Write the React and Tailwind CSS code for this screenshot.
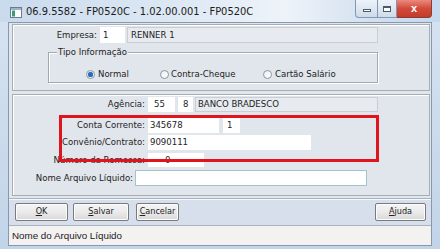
import React from "react";

const Radio = ({ checked }) => (
  <span className="w-[9px] h-[9px] rounded-full border border-[#8e97a3] bg-gradient-to-br from-[#e9edf1] to-[#ffffff] flex items-center justify-center shrink-0">
    {checked && <span className="w-[5px] h-[5px] rounded-full bg-[#2a6bb8] shadow-[0_0_1px_#3d8ae0]" />}
  </span>
);

const Btn = ({ w, ul, rest }) => (
  <div className={`${w} h-[18px] rounded-[2px] border border-[#7a7a7a] bg-gradient-to-b from-[#f4f4f4] via-[#ebebeb] to-[#d8d8d8] shadow-[inset_0_0_0_1px_#fcfcfc] flex items-center justify-center text-[9px] text-[#222]`}>
    <span><span className="underline">{ul}</span>{rest}</span>
  </div>
);

export default function App() {
  return (
    <div className="w-[440px] h-[249px] overflow-hidden bg-gradient-to-b from-[#d6e3f1] to-[#c2d4e8] flex flex-col font-[family-name:'Liberation_Sans_Narrow','DejaVu_Sans_Condensed','Liberation_Sans',sans-serif] text-[#232323]">
      {/* Title bar */}
      <div className="h-[22px] flex items-start shrink-0 bg-[linear-gradient(90deg,#c9daed_0%,#dde8f4_40%,#eef3f9_65%,#d2e0ef_85%,#c6d8ec_100%)]">
        <svg width="12" height="11" viewBox="0 0 12 11" className="ml-[10px] mt-[7px]">
          <rect x="0.5" y="0.5" width="11" height="10" fill="#ffffff" stroke="#6d7c8c" />
          <rect x="1" y="1" width="10" height="2" fill="#9db3c9" />
          <rect x="2" y="3.5" width="3" height="6" fill="#3c9a76" />
        </svg>
        <div className="ml-[4px] mt-[5px] text-[11px] leading-[13px] text-[#1c1c1c]">06.9.5582 - FP0520C - 1.02.00.001 - FP0520C</div>
        <div className="ml-auto mr-[8px] flex items-start">
          <div className="w-[23px] h-[18px] rounded-bl-[4px] border border-t-0 border-[#8297b0] bg-gradient-to-b from-[#eef3f9] to-[#cfdbea] flex items-center justify-center">
            <span className="w-[8px] h-[3px] border border-[#4b5a6b] bg-white mt-[3px]" />
          </div>
          <div className="w-[19px] h-[18px] border border-t-0 border-l-0 border-[#8297b0] bg-gradient-to-b from-[#eef3f9] to-[#cfdbea] flex items-center justify-center">
            <span className="w-[8px] h-[6px] border border-[#4b5a6b] border-t-2 bg-white" />
          </div>
          <div className="w-[35px] h-[18px] rounded-br-[4px] border border-t-0 border-l-0 border-[#8d3a32] bg-gradient-to-b from-[#e9897c] via-[#d24a3a] to-[#c33b2b] flex items-center justify-center">
            <span className="text-white text-[11px] font-bold leading-none font-[family-name:'Liberation_Sans',sans-serif]">x</span>
          </div>
        </div>
      </div>

      {/* Client area */}
      <div className="mx-[8px] mb-[3px] flex-1 border border-[#8798ad] bg-[#e1e6ec] flex flex-col">
        {/* Panel 1 */}
        <div className="ml-[3px] mt-[1px] w-[418px] h-[67px] border border-[#a7adb5] shadow-[inset_1px_1px_0_#ffffff] flex flex-col shrink-0">
          <div className="mt-[2px] flex items-center h-[16px]">
            <div className="w-[84px] text-right text-[9.5px]">Empresa:</div>
            <div className="ml-[3px] w-[25px] h-[16px] bg-white flex items-center pl-[3px] text-[9.5px]">1</div>
            <div className="ml-[2px] w-[251px] h-[16px] bg-[#e7ebf0] border border-[#c9ced5] flex items-center pl-[3px] text-[9.5px]">RENNER 1</div>
          </div>
          <div className="relative ml-[35px] mt-[9px] w-[330px] h-[31px] border border-[#a3a9b1] shadow-[inset_1px_1px_0_#ffffff,1px_1px_0_#ffffff]">
            <div className="absolute -top-[7px] left-[8px] px-[1px] bg-[#e1e6ec] text-[9.5px] leading-[12px]">Tipo Informação</div>
            <div className="mt-[14px] ml-[37px] flex items-center text-[9.5px]">
              <div className="w-[74px] flex items-center gap-[3px]"><Radio checked /><span>Normal</span></div>
              <div className="w-[103px] flex items-center gap-[2px]"><Radio /><span>Contra-Cheque</span></div>
              <div className="flex items-center gap-[3px]"><Radio /><span>Cartão Salário</span></div>
            </div>
          </div>
        </div>

        {/* Panel 2 */}
        <div className="relative ml-[3px] mt-[3px] w-[418px] h-[102px] border border-[#a7adb5] shadow-[inset_1px_1px_0_#ffffff] flex flex-col shrink-0 text-[9.5px]">
          <div className="mt-[2px] flex items-center h-[15px]">
            <div className="w-[132px] text-right">Agência:</div>
            <div className="ml-[3px] w-[27px] h-[15px] bg-white flex items-center pl-[6px]">55</div>
            <div className="ml-[3px] w-[15px] h-[15px] bg-white flex items-center pl-[5px]">8</div>
            <div className="ml-[2px] w-[183px] h-[15px] bg-[#e7ebf0] border border-[#c9ced5] flex items-center pl-[2px]">BANCO BRADESCO</div>
          </div>
          <div className="mt-[6px] flex items-center h-[15px]">
            <div className="w-[132px] text-right">Conta Corrente:</div>
            <div className="ml-[3px] w-[71px] h-[15px] bg-white flex items-center pl-[2px]">345678</div>
            <div className="ml-[4px] w-[17px] h-[15px] bg-white flex items-center pl-[4px]">1</div>
          </div>
          <div className="mt-[2px] flex items-center h-[15px]">
            <div className="w-[132px] text-right">Convênio/Contrato:</div>
            <div className="ml-[3px] w-[163px] h-[15px] bg-white flex items-center pl-[2px]">9090111</div>
          </div>
          <div className="mt-[3px] flex items-center h-[14px]">
            <div className="w-[132px] text-right">Número da Remessa:</div>
            <div className="ml-[3px] w-[56px] h-[14px] bg-white flex items-center pl-[17px]">0</div>
          </div>
          <div className="mt-[3px] flex items-center h-[16px]">
            <div className="w-[120px] text-right">Nome Arquivo Líquido:</div>
            <div className="ml-[2px] w-[232px] h-[16px] bg-white border border-[#a4c3cf]" />
          </div>
          <div className="absolute left-[46px] top-[20px] w-[320px] h-[47px] border-[3px] border-[#e1141e]" />
        </div>

        {/* Button bar */}
        <div className="mt-[2px] h-[28px] border-t border-b border-[#a9b4c2] bg-[#d6dfeb] shadow-[inset_0_1px_0_#f4f7fb] flex items-center shrink-0">
          <div className="ml-[6px]"><Btn w="w-[53px]" ul="O" rest="K" /></div>
          <div className="ml-[5px]"><Btn w="w-[56px]" ul="S" rest="alvar" /></div>
          <div className="ml-[7px]"><Btn w="w-[43px]" ul="C" rest="ancelar" /></div>
          <div className="ml-auto mr-[5px]"><Btn w="w-[51px]" ul="A" rest="juda" /></div>
        </div>

        {/* Status bar */}
        <div className="flex-1 bg-[#f4f1f1] flex items-center pl-[3px] pt-[1px] text-[9.8px] font-[family-name:'Liberation_Sans',sans-serif] text-[#222]">
          Nome do Arquivo Líquido
        </div>
      </div>
    </div>
  );
}
